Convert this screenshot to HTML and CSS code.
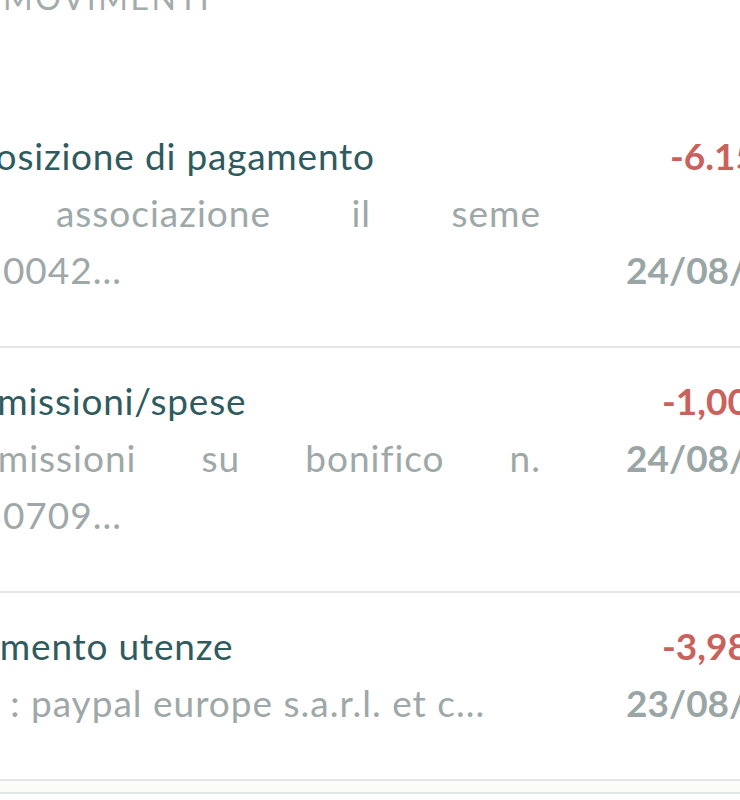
FILE: index.html
```html
<!DOCTYPE html>
<html lang="it">
<head>
<meta charset="utf-8">
<title>Movimenti</title>
<link rel="stylesheet" href="styles.css">
</head>
<body>
<div class="screen">
  <h2 class="section-title">MOVIMENTI</h2>
  <ul class="movements">
    <li class="movement">
      <div class="movement-main">
        <div class="movement-title">Disposizione di pagamento</div>
        <p class="movement-desc movement-desc--justified">Per associazione il seme<br>N.010042...</p>
      </div>
      <div class="movement-meta movement-meta--spread">
        <span class="amount amount--wide">-6.150,00 €</span>
        <span class="date">24/08/2023</span>
      </div>
    </li>
    <li class="movement">
      <div class="movement-main">
        <div class="movement-title">Commissioni/spese</div>
        <p class="movement-desc movement-desc--justified">Commissioni su bonifico n.<br>N.230709...</p>
      </div>
      <div class="movement-meta">
        <span class="amount">-1,00 €</span>
        <span class="date">24/08/2023</span>
      </div>
    </li>
    <li class="movement">
      <div class="movement-main">
        <div class="movement-title">Pagamento utenze</div>
        <p class="movement-desc">Dest : paypal europe s.a.r.l. et c...</p>
      </div>
      <div class="movement-meta">
        <span class="amount">-3,98 €</span>
        <span class="date">23/08/2023</span>
      </div>
    </li>
  </ul>
  <div class="list-end"></div>
</div>
</body>
</html>
```
FILE: styles.css
```css
html, body {
  margin: 0;
  padding: 0;
  background: #ffffff;
  overflow: hidden;
}

body {
  font-family: Lato, "Open Sans", "Liberation Sans", sans-serif;
  width: 740px;
  height: 800px;
}

.screen {
  width: 900px;
  margin-left: -81px;
}

.section-title {
  margin: -22px 0 0 84px;
  font-size: 32px;
  line-height: 40px;
  font-weight: 400;
  letter-spacing: 2.5px;
  color: #a3abab;
}

.movements {
  list-style: none;
  margin: 85px 0 0;
  padding: 0;
}

.movement {
  display: flex;
  padding: 24px 0 48px;
  border-bottom: 2px solid #e4e5e5;
}

.movement-main {
  width: 622px;
  flex: none;
}

.movement-title {
  font-size: 37px;
  line-height: 57px;
  letter-spacing: 0.8px;
  color: #2f5b5f;
}

.movement-desc {
  margin: 0;
  font-size: 37px;
  line-height: 57px;
  letter-spacing: 1px;
  color: #9ea8a8;
}

.movement-desc--justified {
  text-align: justify;
  text-align-last: justify;
}

.movement-meta {
  margin-left: 85px;
  width: 200px;
  flex: none;
  display: flex;
  flex-direction: column;
  font-size: 37px;
  line-height: 57px;
  font-weight: 700;
}

.movement-meta--spread {
  justify-content: space-between;
}

.amount {
  color: #c9625c;
  padding-left: 36px;
  white-space: nowrap;
}

.amount--wide {
  padding-left: 44px;
}

.date {
  color: #9aa6a5;
  white-space: nowrap;
}

.list-end {
  height: 11px;
  background: #fbfcf8;
  border-bottom: 2px solid #e3e6e6;
}
```
